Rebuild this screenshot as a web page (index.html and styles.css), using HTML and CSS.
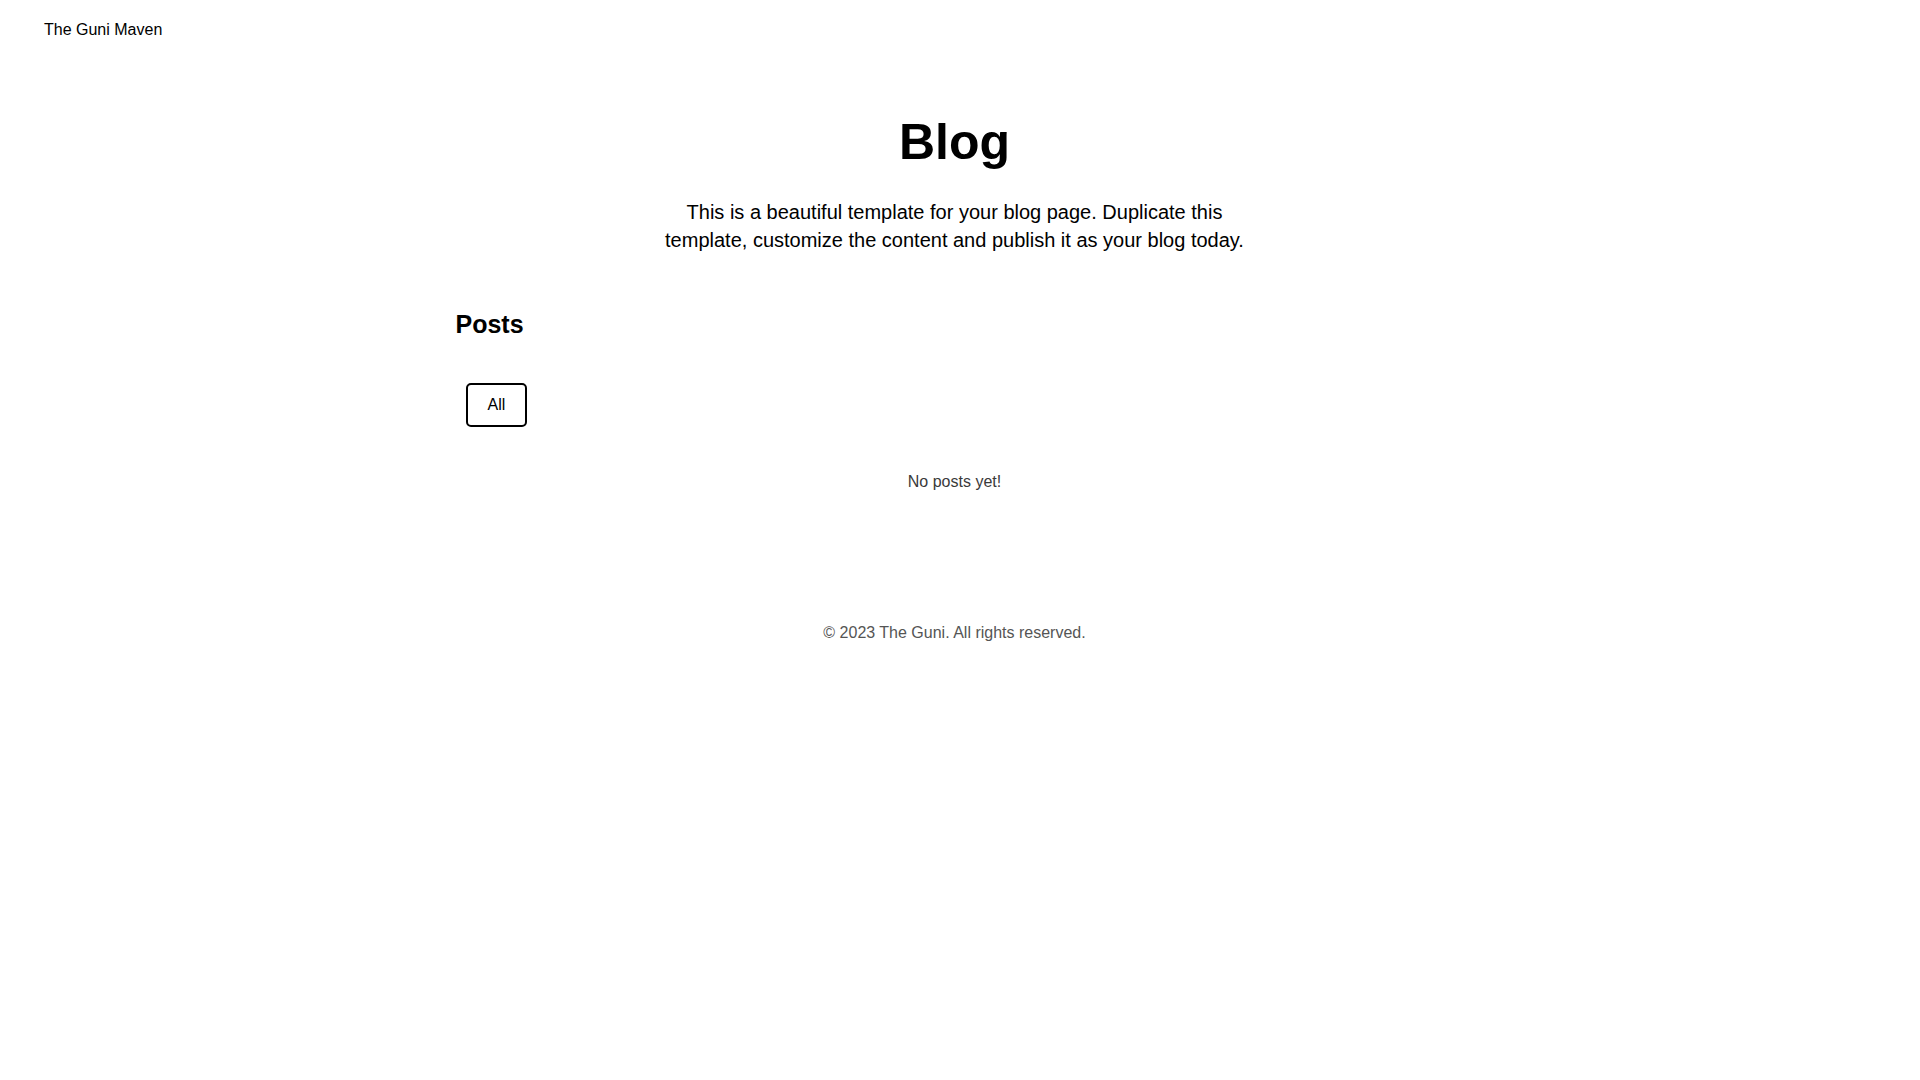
FILE: index.html
```html
<!DOCTYPE html>
<html lang="en">
<head>
<meta charset="utf-8">
<title>Blog - The Guni Maven</title>
<link rel="stylesheet" href="styles.css">
</head>
<body>
<header class="site-header">
  <a class="brand" href="#">The Guni Maven</a>
</header>
<main class="page">
  <section class="intro">
    <h1 class="intro-title">Blog</h1>
    <p class="intro-text">This is a beautiful template for your blog page. Duplicate this template, customize the content and publish it as your blog today.</p>
  </section>
  <section class="posts">
    <h2 class="posts-title">Posts</h2>
    <div class="filters">
      <button class="filter-btn" type="button">All</button>
    </div>
    <p class="empty">No posts yet!</p>
  </section>
</main>
<footer class="site-footer">
  <p class="copyright">© 2023 The Guni. All rights reserved.</p>
</footer>
</body>
</html>
```
FILE: styles.css
```css
* {
  box-sizing: border-box;
}

html, body {
  margin: 0;
  padding: 0;
  background: #ffffff;
}

body {
  font-family: "Liberation Sans", Arial, sans-serif;
  color: #000000;
  padding-right: 11px;
}

.site-header {
  padding: 21px 44px 0;
  height: 114px;
}

.brand {
  display: inline-block;
  font-size: 16px;
  line-height: 18px;
  color: #000000;
  text-decoration: none;
}

.page {
  display: flex;
  flex-direction: column;
  align-items: center;
}

.intro {
  display: flex;
  flex-direction: column;
  align-items: center;
  text-align: center;
}

.intro-title {
  margin: 0;
  font-size: 50px;
  line-height: 56px;
  font-weight: 700;
}

.intro-text {
  margin: 28px 0 0;
  max-width: 600px;
  font-size: 20px;
  line-height: 28px;
}

.posts {
  width: 998px;
  margin-top: 56px;
  display: flex;
  flex-direction: column;
}

.posts-title {
  margin: 0;
  font-size: 25px;
  line-height: 28px;
  font-weight: 700;
}

.filters {
  display: flex;
  gap: 8px;
  margin-top: 45px;
  padding-left: 10px;
}

.filter-btn {
  font-family: "Liberation Sans", Arial, sans-serif;
  font-size: 16px;
  line-height: 20px;
  padding: 10px 20px;
  border: 2px solid #000000;
  border-radius: 5px;
  background: #ffffff;
  color: #000000;
  cursor: pointer;
}

.empty {
  margin: 46px 0 0;
  text-align: center;
  font-size: 16px;
  line-height: 18px;
  color: #3a3a3a;
}

.site-footer {
  margin-top: 133px;
  text-align: center;
}

.copyright {
  margin: 0;
  font-size: 16px;
  line-height: 18px;
  color: #555555;
}
```
